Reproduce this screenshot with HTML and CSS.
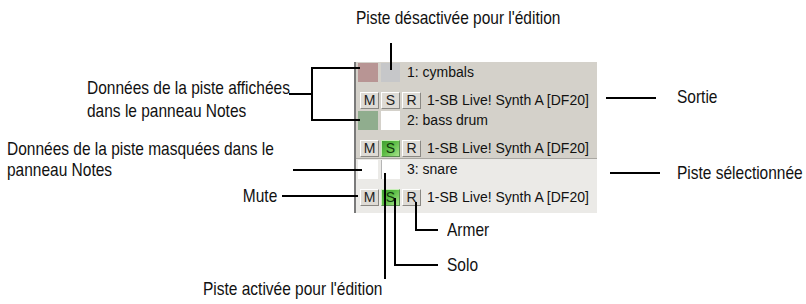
FILE: index.html
```html
<!DOCTYPE html>
<html lang="fr">
<head>
<meta charset="utf-8">
<title>Pistes</title>
<link rel="stylesheet" href="styles.css">
</head>
<body>
<div class="stage">
  <div class="panel">
    <div class="track">
      <div class="name-row">
        <span class="swatch sw-rose"></span>
        <span class="swatch sw-grey"></span>
        <span class="track-name">1: cymbals</span>
      </div>
      <div class="btn-row">
        <span class="btn">M</span><span class="btn">S</span><span class="btn">R</span>
        <span class="port">1-SB Live! Synth A [DF20]</span>
      </div>
    </div>
    <div class="track">
      <div class="name-row">
        <span class="swatch sw-green"></span>
        <span class="swatch sw-white"></span>
        <span class="track-name">2: bass drum</span>
      </div>
      <div class="btn-row">
        <span class="btn">M</span><span class="btn btn-on">S</span><span class="btn">R</span>
        <span class="port">1-SB Live! Synth A [DF20]</span>
      </div>
    </div>
    <div class="track track-selected">
      <div class="name-row">
        <span class="swatch sw-white"></span>
        <span class="swatch sw-white sw-edge"></span>
        <span class="track-name">3: snare</span>
      </div>
      <div class="btn-row">
        <span class="btn">M</span><span class="btn btn-on">S</span><span class="btn">R</span>
        <span class="port">1-SB Live! Synth A [DF20]</span>
      </div>
    </div>
  </div>

  <svg class="leaders" width="806" height="304" viewBox="0 0 806 304">
    <g stroke="#000" stroke-width="2" fill="none" shape-rendering="crispEdges">
      <line x1="391" y1="43" x2="391" y2="70"/>
      <line x1="289" y1="94" x2="313" y2="94"/>
      <line x1="312" y1="67" x2="312" y2="121"/>
      <line x1="311" y1="68" x2="360" y2="68"/>
      <line x1="311" y1="120" x2="360" y2="120"/>
      <line x1="293" y1="170" x2="362" y2="170"/>
      <line x1="282" y1="196" x2="358" y2="196"/>
      <line x1="385" y1="173" x2="385" y2="279"/>
      <line x1="395" y1="198" x2="395" y2="266"/>
      <line x1="394" y1="265" x2="438" y2="265"/>
      <line x1="416" y1="202" x2="416" y2="231"/>
      <line x1="415" y1="230" x2="438" y2="230"/>
      <line x1="606" y1="98" x2="656" y2="98"/>
      <line x1="610" y1="173" x2="660" y2="173"/>
    </g>
  </svg>

  <div class="label l-disabled">Piste désactivée pour l'édition</div>
  <div class="label l-shown">Données de la piste affichées<br>dans le panneau Notes</div>
  <div class="label l-hidden">Données de la piste masquées dans le<br>panneau Notes</div>
  <div class="label l-mute">Mute</div>
  <div class="label l-enabled">Piste activée pour l'édition</div>
  <div class="label l-solo">Solo</div>
  <div class="label l-arm">Armer</div>
  <div class="label l-output">Sortie</div>
  <div class="label l-selected">Piste sélectionnée</div>
</div>
</body>
</html>
```
FILE: styles.css
```css
html, body {
  margin: 0;
  padding: 0;
  background: #fff;
}

.stage {
  position: relative;
  width: 806px;
  height: 304px;
  overflow: hidden;
  background: #fff;
  box-sizing: border-box;
  padding: 62px 0 0 354px;
  font-family: "Liberation Sans", Arial, sans-serif;
}

/* ---------- track panel ---------- */
.panel {
  width: 243px;
  height: 151px;
  box-sizing: border-box;
  background: #d4d1ca;
  border-left: 2px solid #7a7a7a;
  display: flex;
  flex-direction: column;
  font-size: 14px;
  color: #111;
}

.track {
  height: 48px;
  flex: none;
  box-sizing: border-box;
}

.track-selected {
  flex: 1;
  background: #ebeae7;
  border-top: 1px solid #a9a7a2;
}

.name-row {
  display: flex;
  align-items: flex-start;
  height: 26px;
  box-sizing: border-box;
  padding: 1px 0 0 2px;
}

.swatch {
  width: 20px;
  height: 19px;
  box-sizing: border-box;
  flex: none;
}
.swatch + .swatch { margin-left: 3px; width: 19px; }

.sw-rose  { background: #b89594; }
.sw-grey  { background: #c6c7c9; }
.sw-green { background: #90ad8e; }
.sw-white { background: #fff; }
.sw-edge  { border-left: 1px solid #b5b5b5; }

.track-name {
  margin-left: 7px;
  line-height: 19px;
  white-space: nowrap;
}

.btn-row {
  display: flex;
  align-items: center;
  margin-top: 4px;
  padding-left: 4px;
  height: 17px;
}

.btn {
  width: 19px;
  height: 17px;
  box-sizing: border-box;
  flex: none;
  display: flex;
  align-items: center;
  justify-content: center;
  background: #dedbd5;
  border-top: 1px solid #fff;
  border-left: 1px solid #fff;
  border-right: 1px solid #8a8883;
  border-bottom: 1px solid #8a8883;
  font-size: 14px;
  line-height: 15px;
  color: #222;
}
.btn + .btn { margin-left: 2px; }

.btn-on {
  background: linear-gradient(135deg, #3f9f30 0%, #5cbc44 45%, #a6e48a 100%);
  color: #113a0c;
  border-top-color: #c8f0b8;
  border-left-color: #c8f0b8;
  border-right-color: #5a8a50;
  border-bottom-color: #5a8a50;
}

.port {
  margin-left: 6px;
  white-space: nowrap;
  line-height: 17px;
}

/* ---------- callouts ---------- */
.leaders {
  position: absolute;
  left: 0;
  top: 0;
  pointer-events: none;
}

.label {
  position: absolute;
  font-family: "Liberation Sans", Arial, sans-serif;
  font-size: 19px;
  line-height: 22px;
  color: #111;
  white-space: nowrap;
  transform: scaleX(0.815);
  transform-origin: 0 50%;
}

.l-disabled { left: 356px; top: 7px; }
.l-shown    { left: 87px;  top: 76px; line-height: 23px; }
.l-hidden   { left: 7px;   top: 138px; line-height: 21px; }
.l-mute     { right: 529px; top: 185px; transform-origin: 100% 50%; }
.l-enabled  { left: 203px; top: 278px; }
.l-solo     { left: 447px; top: 254px; }
.l-arm      { left: 447px; top: 219px; }
.l-output   { left: 677px; top: 86px; }
.l-selected { left: 677px; top: 162px; }
```
